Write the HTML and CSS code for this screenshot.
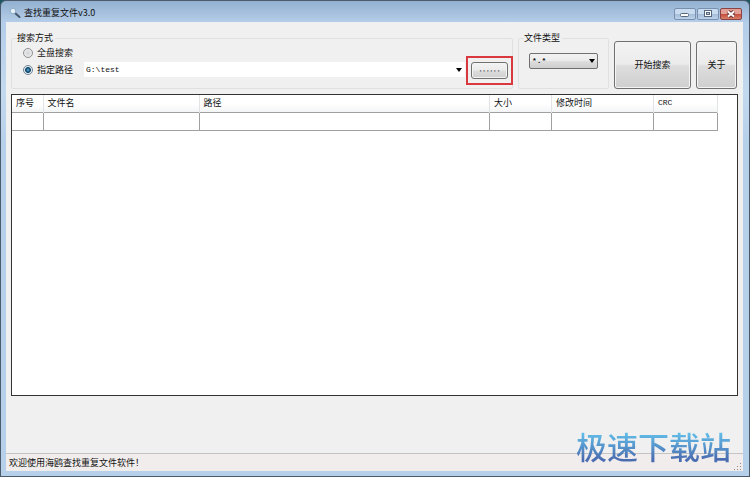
FILE: index.html
```html
<!DOCTYPE html>
<html lang="zh-CN">
<head>
    <meta charset="UTF-8">
    <meta name="viewport" content="width=device-width, initial-scale=1.0">
    <title>查找重复文件v3.0</title>
    <link rel="stylesheet" href="styles.css">
</head>
<body>
    <div class="window">
        <header class="title-bar">
            <svg class="app-icon" viewBox="0 0 12 12" aria-hidden="true">
                <path d="M6 6l4.5 4" stroke="#46586c" stroke-width="2" stroke-linecap="round"/>
                <circle cx="4" cy="4" r="2.8" fill="#e4f0fa" stroke="#8fabc6" stroke-width="1"/>
            </svg>
            <h1>查找重复文件v3.0</h1>
            <div class="window-controls">
                <button type="button" class="control" aria-label="最小化">
                    <svg viewBox="0 0 20 10"><rect x="5.5" y="4.5" width="8" height="3" rx="1" fill="#fff" stroke="#56677c"/></svg>
                </button>
                <button type="button" class="control" aria-label="最大化">
                    <svg viewBox="0 0 20 10"><rect x="6.5" y="1.5" width="7" height="6" fill="#fff" stroke="#56677c"/><rect x="8.5" y="3.5" width="3" height="2" fill="#b9cde3" stroke="#56677c"/></svg>
                </button>
                <button type="button" class="control close" aria-label="关闭">
                    <svg viewBox="0 0 20 10"><path d="M7 2.5l6 5m0-5l-6 5" stroke="#6d3535" stroke-width="4"/><path d="M7 2.5l6 5m0-5l-6 5" stroke="#fff" stroke-width="2"/></svg>
                </button>
            </div>
        </header>

        <main class="content">
            <form class="toolbar">
                <fieldset class="group search-mode">
                    <legend>搜索方式</legend>
                    <div class="mode-row">
                        <input type="radio" name="mode" id="mode-all">
                        <label for="mode-all">全盘搜索</label>
                    </div>
                    <div class="mode-row">
                        <input type="radio" name="mode" id="mode-path" checked>
                        <label for="mode-path">指定路径</label>
                        <div class="combo path-combo">
                            <select aria-label="路径">
                                <option>G:\test</option>
                            </select>
                        </div>
                        <div class="highlight">
                            <button type="button" class="btn browse" aria-label="浏览">
                                <span>······</span>
                            </button>
                        </div>
                    </div>
                </fieldset>
                <fieldset class="group file-type">
                    <legend>文件类型</legend>
                    <div class="combo type-combo">
                        <select aria-label="文件类型">
                            <option>*.*</option>
                        </select>
                    </div>
                </fieldset>
                <button type="button" class="btn start">开始搜索</button>
                <button type="button" class="btn about">关于</button>
            </form>

            <div class="results">
                <table>
                    <colgroup>
                        <col class="col-no">
                        <col class="col-name">
                        <col class="col-path">
                        <col class="col-size">
                        <col class="col-time">
                        <col class="col-crc">
                    </colgroup>
                    <thead>
                        <tr>
                            <th>序号</th>
                            <th>文件名</th>
                            <th>路径</th>
                            <th>大小</th>
                            <th>修改时间</th>
                            <th class="mono">CRC</th>
                        </tr>
                    </thead>
                    <tbody>
                        <tr>
                            <td></td>
                            <td></td>
                            <td></td>
                            <td></td>
                            <td></td>
                            <td></td>
                        </tr>
                    </tbody>
                </table>
            </div>

            <footer class="status-bar">
                <span>欢迎使用海鸥查找重复文件软件！</span>
                <svg class="grip" viewBox="0 0 9 9" aria-hidden="true">
                    <path fill="#918b8e" d="M7 1h1v1H7zM4 4h1v1H4zM7 4h1v1H7zM1 7h1v1H1zM4 7h1v1H4zM7 7h1v1H7z"/>
                </svg>
            </footer>
        </main>
        <div class="watermark">极速下载站</div>
    </div>
</body>
</html>
```

FILE: styles.css
```css
:root {
    --face: #f0f0f0;
    --frame: #b7d0ea;
    --line: #a0a0a0;
    --group-line: #e0e0e0;
    --text: #111;
    --ui-font: "Noto Sans CJK SC", sans-serif;
    --mono-font: "Liberation Mono", "Noto Sans CJK SC", monospace;
}

* {
    margin: 0;
    padding: 0;
    box-sizing: border-box;
}

body {
    height: 100vh;
    background-color: #1d5560;
    color: var(--text);
    font-family: var(--ui-font);
    font-size: 9px;
    line-height: 12px;
}

button,
select {
    font: inherit;
    color: inherit;
}

.window {
    position: relative;
    display: flex;
    flex-direction: column;
    height: 100%;
    padding: 0 6px 5px 5px;
    border: 1px solid #4b5b6c;
    border-radius: 6px 6px 0 0;
    background: linear-gradient(#93b0d1, #b4cde8 21px, #c3d9ef 90px, var(--frame) 140px);
}

/* title bar */
.title-bar {
    display: flex;
    align-items: center;
    height: 21px;
    padding: 2px 1px 0 3px;
}

.app-icon {
    width: 12px;
    height: 12px;
    margin-right: 3px;
}

.title-bar h1 {
    flex: 1;
    font-size: 9px;
    font-weight: 400;
}

.window-controls {
    display: flex;
    gap: 1px;
    padding-top: 2px;
}

.control {
    display: flex;
    width: 22px;
    height: 12px;
    border: 1px solid #7890ae;
    border-radius: 2px;
    background: linear-gradient(#c9dbee 45%, #a3bcd8 50%, #bdd3ea);
}

.control svg {
    width: 100%;
    height: 100%;
}

.control.close {
    border-color: #8a4242;
    background: linear-gradient(#e3a097 45%, #c44b3c 50%, #d77f68);
}

/* client area */
.content {
    flex: 1;
    display: flex;
    flex-direction: column;
    min-height: 0;
    background-color: var(--face);
}

.toolbar {
    display: flex;
    align-items: flex-end;
    gap: 5px;
    padding: 10px 6px 5px 5px;
}

.group {
    height: 57px;
    min-width: 0;
    border: 1px solid var(--group-line);
    border-radius: 2px;
}

.group legend {
    margin-left: 5px;
    padding-right: 2px;
}

.search-mode {
    flex: 1;
}

.mode-row {
    display: flex;
    align-items: center;
    height: 17px;
    padding-left: 11px;
}

.mode-row input {
    appearance: none;
    width: 10px;
    height: 10px;
    margin-right: 4px;
    border: 1px solid #8e8f8f;
    border-radius: 50%;
    background: radial-gradient(#d2d5d8, #f4f4f4);
}

.mode-row input:checked {
    border-color: #6d8294;
    background: radial-gradient(circle, #5fb5dd 0, #174b70 35%, #174b70 45%, #e8f0f5 60%);
}

.mode-row label {
    width: 47px;
}

.combo {
    position: relative;
}

.combo::after {
    content: "";
    position: absolute;
    top: 6px;
    right: 3px;
    border: 3px solid transparent;
    border-top: 4px solid #000;
    border-bottom: 0;
    pointer-events: none;
}

.combo select {
    display: block;
    appearance: none;
    width: 100%;
    height: 15px;
    padding: 0 2px;
    border: 0;
    background-color: #fff;
    font-family: var(--mono-font);
    font-size: 8px;
}

.path-combo {
    flex: 1;
}

.highlight {
    display: flex;
    flex: none;
    margin: 2px -1px 0 1px;
    padding: 4px 3px;
    border: 2px solid #d9383e;
}

.btn {
    border: 1px solid #707070;
    border-radius: 3px;
    background: linear-gradient(#f3f3f3, #ebebeb 48%, #dddddd 52%, #cfcfcf);
    box-shadow: inset 0 0 0 1px #f4f4f4;
}

.browse {
    width: 37px;
    height: 17px;
    font-family: "DejaVu Sans Mono", monospace;
    font-weight: 700;
    font-size: 6px;
}

.file-type {
    width: 91px;
}

.type-combo {
    margin: 9px 10px 0;
}

.type-combo select {
    height: 16px;
    border: 1px solid #707070;
    border-radius: 2px;
    background: linear-gradient(#f2f2f2, #ebebeb 48%, #dddddd 52%, #cfcfcf);
    font-weight: 700;
}

.start,
.about {
    height: 48px;
}

.start {
    width: 77px;
}

.about {
    width: 41px;
}

/* results grid */
.results {
    flex: 1;
    min-height: 0;
    margin: 0 5px 57px;
    border: 1px solid #333;
    background-color: #fff;
}

.results table {
    width: calc(100% - 19px);
    table-layout: fixed;
    border-collapse: collapse;
}

.col-no {
    width: 31px;
}

.col-name {
    width: 156px;
}

.col-size {
    width: 62px;
}

.col-time {
    width: 102px;
}

.col-crc {
    width: 64px;
}

.results th {
    height: 17px;
    padding-left: 4px;
    border-right: 1px solid #e2e3e5;
    background: linear-gradient(#fff 50%, #f3f4f5);
    text-align: left;
    font-weight: 400;
}

.results .mono {
    font-family: var(--mono-font);
    font-size: 8px;
}

.results td {
    height: 18px;
    border: 1px solid var(--line);
}

.results td:first-child {
    border-left: 0;
}

/* status bar */
.status-bar {
    display: flex;
    align-items: center;
    justify-content: space-between;
    height: 18px;
    padding: 0 1px 0 3px;
    border-top: 1px solid #c4c4c4;
    background-color: #f1eded;
}

.grip {
    align-self: flex-end;
    width: 9px;
    height: 9px;
}

.watermark {
    position: absolute;
    right: 18px;
    bottom: 13px;
    background: linear-gradient(#62c0ea 10%, #4a6cb0 90%);
    background-clip: text;
    -webkit-background-clip: text;
    color: transparent;
    font-size: 31px;
    font-weight: 500;
    line-height: 34px;
    pointer-events: none;
}
```
